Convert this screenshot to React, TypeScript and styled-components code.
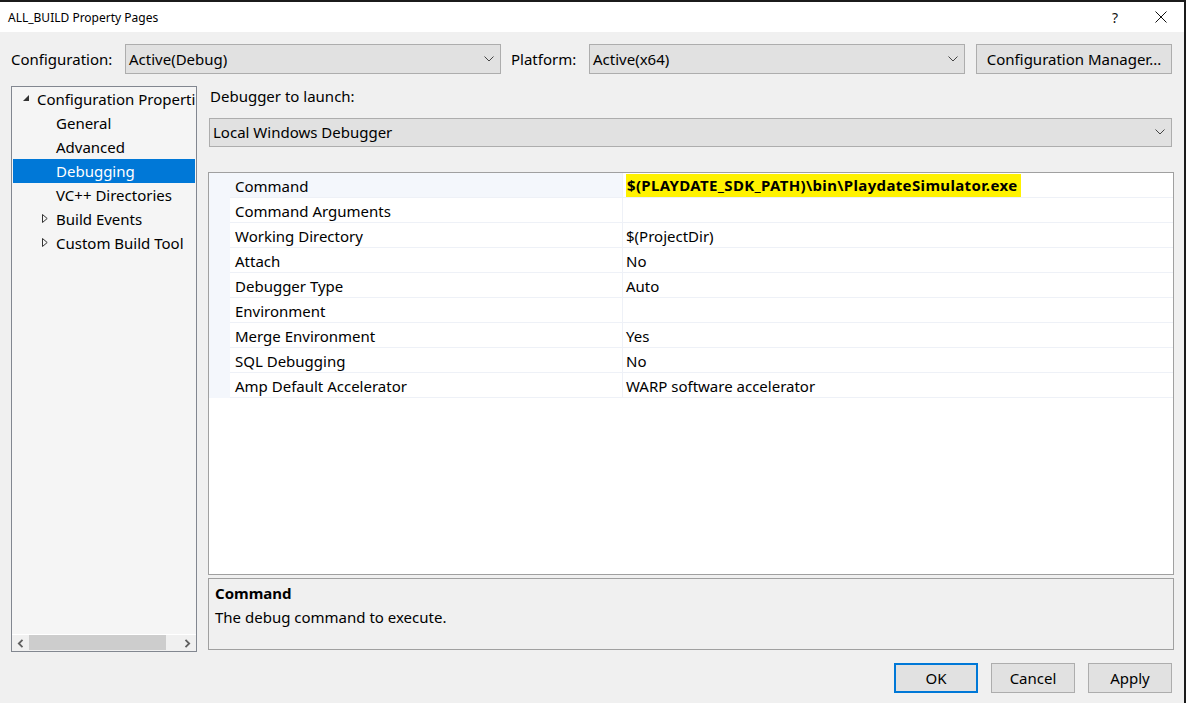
import React from "react";
import styled, { createGlobalStyle } from "styled-components";

const Global = createGlobalStyle`
  html, body { margin: 0; padding: 0; background: #f0f0f0; }
  body { font-family: "Noto Sans", "Open Sans", sans-serif; color: #000; }
  * { box-sizing: border-box; }
`;

const Window = styled.div`
  width: 1186px;
  height: 703px;
  display: flex;
  flex-direction: column;
  background: #f0f0f0;
  border-top: 2px solid #1b1b1b;
  border-right: 2px solid #1b1b1b;
  overflow: hidden;
  font-size: 15px;
`;

const TitleBar = styled.div`
  height: 30px;
  background: #fff;
  display: flex;
  align-items: center;
  padding-left: 8px;
  font-size: 12px;
  flex-shrink: 0;
`;

const Title = styled.div`
  flex: 1;
`;

const TitleButton = styled.div`
  width: 46px;
  height: 30px;
  display: flex;
  align-items: center;
  justify-content: center;
  font-size: 14px;
  color: #111;
`;

const Body = styled.div`
  flex: 1;
  display: flex;
  flex-direction: column;
  padding: 12px 10px 11px 11px;
`;

const ConfigRow = styled.div`
  display: flex;
  align-items: center;
  height: 30px;
`;

const Label = styled.div<{ $w: number }>`
  width: ${(p) => p.$w}px;
  flex-shrink: 0;
  padding-bottom: 1px;
`;

const Combo = styled.div<{ $w?: number; $h?: number }>`
  ${(p) => (p.$w ? `width: ${p.$w}px;` : "flex: 1;")}
  height: ${(p) => p.$h ?? 30}px;
  background: #e1e1e1;
  border: 1px solid #adadad;
  display: flex;
  align-items: center;
  padding: 0 6px 1px 3px;
  flex-shrink: 0;
`;

const ComboText = styled.div`
  flex: 1;
`;

const Gap = styled.div<{ $w: number }>`
  width: ${(p) => p.$w}px;
  flex-shrink: 0;
`;

const Button = styled.div<{ $w: number; $def?: boolean }>`
  width: ${(p) => p.$w}px;
  height: 30px;
  background: #e1e1e1;
  border: ${(p) => (p.$def ? "2px solid #0078d7" : "1px solid #adadad")};
  display: flex;
  align-items: center;
  justify-content: center;
  padding-bottom: 1px;
  flex-shrink: 0;
`;

const Main = styled.div`
  display: flex;
  gap: 11px;
  margin-top: 12px;
  height: 566px;
`;

const Tree = styled.div`
  width: 186px;
  flex-shrink: 0;
  background: #f5f5f5;
  border: 1px solid #828790;
  display: flex;
  flex-direction: column;
`;

const TreeItems = styled.div`
  flex: 1;
`;

const TreeRow = styled.div<{ $indent: number; $sel?: boolean }>`
  height: 24px;
  display: flex;
  align-items: center;
  padding-left: ${(p) => p.$indent}px;
  padding-bottom: 1px;
  margin: 0 1px;
  background: ${(p) => (p.$sel ? "#0078d7" : "transparent")};
  color: ${(p) => (p.$sel ? "#fff" : "#000")};
  white-space: nowrap;
  overflow: hidden;
`;

const Expander = styled.div`
  width: 14px;
  flex-shrink: 0;
  display: flex;
  align-items: center;
`;

const HScroll = styled.div`
  height: 17px;
  display: flex;
  align-items: center;
  border-top: 1px solid #fff;
  background: #f0f0f0;
`;

const ScrollArrow = styled.div`
  width: 17px;
  height: 17px;
  display: flex;
  align-items: center;
  justify-content: center;
`;

const ScrollTrack = styled.div`
  flex: 1;
  height: 17px;
  display: flex;
`;

const Thumb = styled.div`
  width: 137px;
  height: 15px;
  background: #cdcdcd;
`;

const Right = styled.div`
  flex: 1;
  display: flex;
  flex-direction: column;
`;

const SectionLabel = styled.div`
  height: 20px;
  padding-left: 2px;
  display: flex;
  align-items: center;
`;

const DropWrap = styled.div`
  margin-top: 12px;
  padding: 0 2px 0 1px;
  display: flex;
`;

const Grid = styled.div`
  margin-top: 25px;
  height: 403px;
  background: #fff;
  border: 1px solid #a0a0a0;
  display: flex;
  flex-direction: column;
`;

const GridRow = styled.div`
  display: flex;
  height: 25px;
  flex-shrink: 0;
`;

const Margin = styled.div`
  width: 21px;
  background: #f4f7fc;
  flex-shrink: 0;
`;

const NameCell = styled.div<{ $sel?: boolean }>`
  width: 393px;
  flex-shrink: 0;
  padding: 1px 0 0 5px;
  display: flex;
  align-items: center;
  background: ${(p) => (p.$sel ? "#f4f7fc" : "#fff")};
  border-bottom: 1px solid #eef1f7;
  border-right: 1px solid #eef1f7;
`;

const ValueCell = styled.div`
  flex: 1;
  padding: 1px 0 0 3px;
  display: flex;
  align-items: center;
  border-bottom: 1px solid #eef1f7;
`;

const Highlight = styled.span`
  background: #fff200;
  font-weight: 700;
  letter-spacing: 0.35px;
  padding: 1px 4px 2px 1px;
`;

const Desc = styled.div`
  margin-top: 3px;
  height: 72px;
  border: 1px solid #a0a0a0;
  padding: 4px 6px;
  display: flex;
  flex-direction: column;
  gap: 4px;
`;

const DescTitle = styled.div`
  font-weight: 700;
`;

const Buttons = styled.div`
  display: flex;
  justify-content: flex-end;
  gap: 13px;
  margin-top: 11px;
  padding-right: 2px;
`;

const Chevron = () => (
  <svg width="10" height="6" viewBox="0 0 10 6">
    <polyline points="0.5,0.5 5,5 9.5,0.5" fill="none" stroke="#444" strokeWidth="1" />
  </svg>
);

const ExpandedTri = () => (
  <svg width="7" height="7" viewBox="0 0 7 7">
    <polygon points="6,0 6,6 0,6" fill="#333" />
  </svg>
);

const CollapsedTri = () => (
  <svg width="6" height="9" viewBox="0 0 6 9">
    <polygon points="0.5,0.5 5.2,4.5 0.5,8.5" fill="none" stroke="#333" strokeWidth="1" />
  </svg>
);

const ArrowL = () => (
  <svg width="7" height="9" viewBox="0 0 7 9">
    <polyline points="5.5,0.8 1.8,4.5 5.5,8.2" fill="none" stroke="#606060" strokeWidth="1.8" />
  </svg>
);
const ArrowR = () => (
  <svg width="7" height="9" viewBox="0 0 7 9">
    <polyline points="1.5,0.8 5.2,4.5 1.5,8.2" fill="none" stroke="#606060" strokeWidth="1.8" />
  </svg>
);

const props: [string, React.ReactNode][] = [
  ["Command", <Highlight>$(PLAYDATE_SDK_PATH)\bin\PlaydateSimulator.exe</Highlight>],
  ["Command Arguments", ""],
  ["Working Directory", "$(ProjectDir)"],
  ["Attach", "No"],
  ["Debugger Type", "Auto"],
  ["Environment", ""],
  ["Merge Environment", "Yes"],
  ["SQL Debugging", "No"],
  ["Amp Default Accelerator", "WARP software accelerator"],
];

export default function App() {
  return (
    <Window>
      <Global />
      <TitleBar>
        <Title>ALL_BUILD Property Pages</Title>
        <TitleButton>?</TitleButton>
        <TitleButton>
          <svg width="12" height="12" viewBox="0 0 12 12">
            <path d="M0.5 0.5 L11.5 11.5 M11.5 0.5 L0.5 11.5" stroke="#111" strokeWidth="1" />
          </svg>
        </TitleButton>
      </TitleBar>
      <Body>
        <ConfigRow>
          <Label $w={114}>Configuration:</Label>
          <Combo $w={376}>
            <ComboText>Active(Debug)</ComboText>
            <Chevron />
          </Combo>
          <Gap $w={10} />
          <Label $w={78}>Platform:</Label>
          <Combo $w={376}>
            <ComboText>Active(x64)</ComboText>
            <Chevron />
          </Combo>
          <Gap $w={11} />
          <Button $w={196}>Configuration Manager...</Button>
        </ConfigRow>
        <Main>
          <Tree>
            <TreeItems>
              <TreeRow $indent={10}>
                <Expander><ExpandedTri /></Expander>
                Configuration Properties
              </TreeRow>
              <TreeRow $indent={43}>General</TreeRow>
              <TreeRow $indent={43}>Advanced</TreeRow>
              <TreeRow $indent={43} $sel>Debugging</TreeRow>
              <TreeRow $indent={43}>VC++ Directories</TreeRow>
              <TreeRow $indent={29}>
                <Expander><CollapsedTri /></Expander>
                Build Events
              </TreeRow>
              <TreeRow $indent={29}>
                <Expander><CollapsedTri /></Expander>
                Custom Build Tool
              </TreeRow>
            </TreeItems>
            <HScroll>
              <ScrollArrow><ArrowL /></ScrollArrow>
              <ScrollTrack><Thumb /></ScrollTrack>
              <ScrollArrow><ArrowR /></ScrollArrow>
            </HScroll>
          </Tree>
          <Right>
            <SectionLabel>Debugger to launch:</SectionLabel>
            <DropWrap>
              <Combo $h={29}>
                <ComboText>Local Windows Debugger</ComboText>
                <Chevron />
              </Combo>
            </DropWrap>
            <Grid>
              {props.map(([n, v], i) => (
                <GridRow key={n}>
                  <Margin />
                  <NameCell $sel={i === 0}>{n}</NameCell>
                  <ValueCell>{v}</ValueCell>
                </GridRow>
              ))}
            </Grid>
            <Desc>
              <DescTitle>Command</DescTitle>
              <div>The debug command to execute.</div>
            </Desc>
          </Right>
        </Main>
        <Buttons>
          <Button $w={84} $def>OK</Button>
          <Button $w={84}>Cancel</Button>
          <Button $w={84}>Apply</Button>
        </Buttons>
      </Body>
    </Window>
  );
}
